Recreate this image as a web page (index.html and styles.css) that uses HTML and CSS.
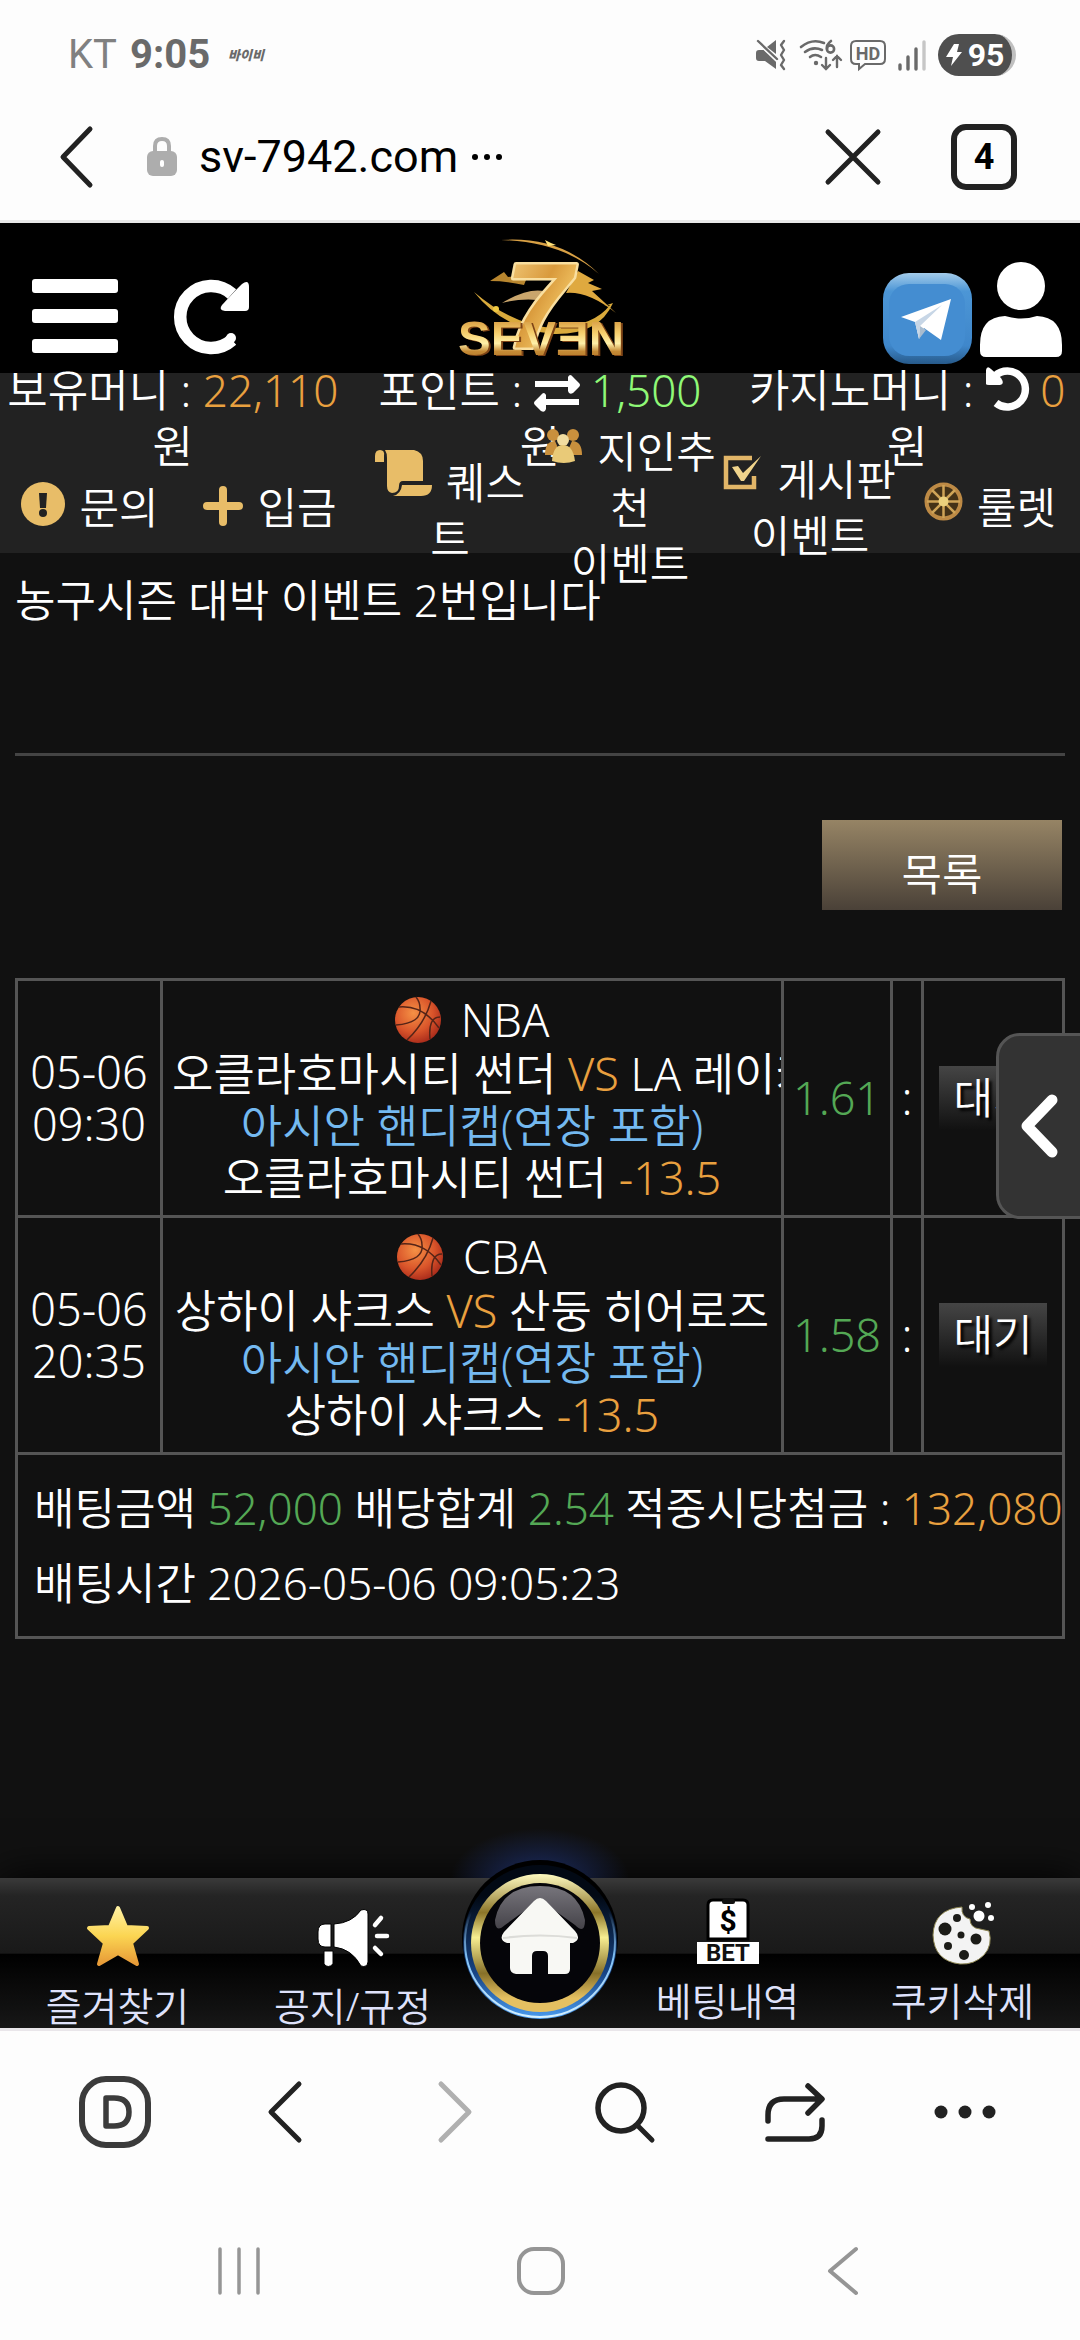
FILE: index.html
```html
<!DOCTYPE html>
<html lang="ko">
<head>
<meta charset="utf-8">
<meta name="viewport" content="width=device-width, initial-scale=1">
<title>SEVEN</title>
<link rel="stylesheet" href="styles.css">
</head>
<body>
<div class="status-bar">
  <div class="status-left">
    <span class="carrier">KT</span>
    <span class="clock">9:05</span>
    <span class="notice">바이비</span>
  </div>
  <div class="status-right">
    <svg class="s-mute" width="32" height="32" viewBox="0 0 32 32" aria-hidden="true">
      <path d="M2 11h7l12 10v9L10 22H4q-3 0-3-3v-5q0-3 3-3z" fill="#6a6a6a"/>
      <path d="M12 8l9-7v14z" fill="#6a6a6a"/>
      <path d="M3 3l20 19" stroke="#fdfdfd" stroke-width="4"/>
      <path d="M3 2l19 18" stroke="#6a6a6a" stroke-width="2.4" stroke-linecap="round"/>
      <path d="M29 2l-3 4 3 5-3 5 3 5-3 5 3 4" fill="none" stroke="#6a6a6a" stroke-width="2.4" stroke-linecap="round" stroke-linejoin="round"/>
    </svg>
    <svg class="s-wifi" width="44" height="32" viewBox="0 0 44 32" aria-hidden="true">
      <g fill="none" stroke="#6a6a6a" stroke-width="2.6" stroke-linecap="round">
        <path d="M2 8q11-9 23-4"/><path d="M6 13q8-6 17-2"/><path d="M11 18q5-4 11 0"/>
        <path d="M32 2q-5 4-4 8"/><circle cx="31.500" cy="10" r="3.600"/>
        <path d="M27 19v11M23 26l4 4 4-4M38 28V17M34 21l4-4 4 4" stroke-width="2.4"/>
      </g>
      <circle cx="17" cy="24" r="2.200" fill="#6a6a6a"/>
    </svg>
    <svg class="s-hd" width="36" height="32" viewBox="0 0 36 32" aria-hidden="true">
      <path d="M6 2h24q5 0 5 5v13q0 5-5 5H15l-6 5v-5H6q-5 0-5-5V7q0-5 5-5z" fill="none" stroke="#6a6a6a" stroke-width="2"/>
      <text x="18" y="21" text-anchor="middle" class="hd-text">HD</text>
    </svg>
    <svg class="s-signal" width="28" height="32" viewBox="0 0 28 32" aria-hidden="true">
      <path d="M2 26v4M10 18v12M18 10v20" stroke="#6a6a6a" stroke-width="3.400" stroke-linecap="round"/>
      <path d="M26 3v27" stroke="#c6c6c6" stroke-width="3.400" stroke-linecap="round"/>
    </svg>
    <span class="battery">
      <svg width="16" height="24" viewBox="0 0 16 24" aria-hidden="true"><path d="M8 1h5l-2 8h5L5 23l2-9H0z" fill="#fff"/></svg>95
    </span>
  </div>
</div>

<div class="url-bar">
  <button class="plain" type="button" aria-label="뒤로">
    <svg width="36" height="64" viewBox="0 0 36 64"><path d="M32 4L5 32l27 28" fill="none" stroke="#222" stroke-width="5" stroke-linecap="round" stroke-linejoin="round"/></svg>
  </button>
  <a class="address" href="#">
    <svg width="32" height="42" viewBox="0 0 32 42" aria-hidden="true"><path d="M9 18v-8q0-7 7-7t7 7v8" fill="none" stroke="#adadad" stroke-width="4"/><rect x="1" y="15" width="30" height="25" rx="6" fill="#adadad"/><rect x="14" y="24" width="4" height="7" rx="2" fill="#fff"/></svg>
    <span>sv-7942.com</span>
    <svg width="30" height="6" viewBox="0 0 30 6" aria-hidden="true"><circle cx="3" cy="3" r="3"/><circle cx="15" cy="3" r="3"/><circle cx="27" cy="3" r="3"/></svg>
  </a>
  <button class="plain close" type="button" aria-label="닫기">
    <svg width="56" height="56" viewBox="0 0 56 56"><path d="M3 3l50 50M53 3L3 53" stroke="#222" stroke-width="5" stroke-linecap="round"/></svg>
  </button>
  <button class="tabs" type="button" aria-label="탭 4개">4</button>
</div>

<header class="site-header">
  <div class="header-left">
    <button class="plain" type="button" aria-label="메뉴">
      <svg width="86" height="76" viewBox="0 0 86 76" fill="#fff"><rect y="1" width="86" height="14" rx="3"/><rect y="31" width="86" height="14" rx="3"/><rect y="61" width="86" height="14" rx="3"/></svg>
    </button>
    <button class="plain" type="button" aria-label="새로고침">
      <svg width="74" height="76" viewBox="0 0 74 76"><path d="M57 62A31 31 0 1 1 57 16" fill="none" stroke="#fff" stroke-width="12.500"/><path d="M60 13l7-7q7-5 7 3v20q0 4-4 4H50q-7-1-3-6z" fill="#fff"/><circle cx="56" cy="60" r="5" fill="#fff"/></svg>
    </button>
  </div>
  <a class="logo" href="#" aria-label="SEVEN">
    <svg width="168" height="124" viewBox="0 0 168 124">
      <defs>
        <linearGradient id="gold" x1="0" y1="0" x2="0" y2="1"><stop offset="0" stop-color="#c07a28"/><stop offset=".4" stop-color="#f5cd6b"/><stop offset=".6" stop-color="#fff0a8"/><stop offset=".75" stop-color="#c58a35"/><stop offset="1" stop-color="#a06a22"/></linearGradient>
        <linearGradient id="gold7" x1="0" y1="0" x2="1" y2="1"><stop offset="0" stop-color="#f8d58a"/><stop offset=".45" stop-color="#d99a3c"/><stop offset=".7" stop-color="#f3c766"/><stop offset="1" stop-color="#c88a30"/></linearGradient>
      </defs>
      <path d="M45 5q60-4 98 34q-36-32-98-34z" fill="#d9a145"/>
      <path d="M89 5l6 3 5 2-8 1z" fill="#ffe27a"/>
      <path d="M34 46l14-9 4 5 20-2-4 10q-18-4-34-4z" fill="#b8862f"/>
      <path d="M122 36l16 9-6 3 14 6-10 2 24 22q-28-22-50-20z" fill="#dfa93f"/>
      <path d="M46 68q30-18 48-10l-4 8q-22-4-44 2z" fill="#c9a56c"/>
      <path d="M18 57q40 34 80 36 40-2 56-23l-6 1 9-3q-14 32-59 31-50-4-80-42z" fill="#d9aa3c"/>
      <circle cx="40" cy="74" r="3" fill="#efc944"/>
      <text x="49" y="112" class="logo-seven" fill="url(#gold7)" stroke="#f9dfa0">7</text>
      <text x="4" y="121" class="logo-word" fill="#7e4416">SEVƎN</text>
      <text x="2" y="120" class="logo-word" fill="url(#gold)">SEVƎN</text>
    </svg>
  </a>
  <div class="header-right">
    <a href="#" aria-label="텔레그램">
      <svg width="89" height="91" viewBox="0 0 89 91">
        <defs><linearGradient id="tg" x1="0" y1="0" x2="0" y2="1"><stop offset="0" stop-color="#a3cbea"/><stop offset=".2" stop-color="#4c96d6"/><stop offset=".8" stop-color="#3f87cb"/><stop offset="1" stop-color="#275a8a"/></linearGradient></defs>
        <rect width="89" height="91" rx="26" fill="url(#tg)"/><rect x="6" y="11" width="76" height="72" rx="20" fill="#448dd1"/>
        <path d="M18 44l50-18-10 41-17-12-5 11-4-17z" fill="#fff"/><path d="M32 49l27-17-22 21-1 13z" fill="#c7d6e6"/><path d="M37 53l-1 13 7-9z" fill="#a9bccf"/>
      </svg>
    </a>
    <a href="#" aria-label="내 정보">
      <svg width="82" height="102" viewBox="0 0 82 102" fill="#fff"><circle cx="41" cy="24" r="24"/><path d="M25 54q16 5 32 0 25 1 25 29v6q0 6-6 6H6q-6 0-6-6v-6q0-28 25-29z"/></svg>
    </a>
  </div>
</header>

<section class="info-bar">
  <div class="stats">
    <p>보유머니 : <span class="orange">22,110</span><br>원</p>
    <p>포인트 : <svg class="stat-icon" width="46" height="36" viewBox="0 0 46 36" fill="#fff" aria-hidden="true"><path d="M1 6h33V2q2-4 5 0l6 6q2 2 0 4l-6 6q-4 2-5-2v-4H1zM45 24H12v-4q-2-4-5 0l-6 6q-2 2 0 4l6 6q4 2 5-2v-4h33z"/></svg> <span class="lime">1,500</span><br>원</p>
    <p>카지노머니 : <svg class="stat-icon" width="44" height="46" viewBox="0 0 44 46" aria-hidden="true"><path d="M10 11a18 18 0 1 1 1 27" fill="none" stroke="#fff" stroke-width="7.500"/><path d="M1 19V5q1-5 5-1l10 9q4 6-1 7H4q-3 0-3-1z" fill="#fff"/></svg> <span class="orange">0</span><br>원</p>
  </div>
  <nav class="quick-menu">
    <a href="#"><svg class="menu-icon low" width="44" height="44" viewBox="0 0 44 44"><circle cx="22" cy="22" r="22" fill="#e8bd68"/><path d="M18 11h8l-1 15h-6z" fill="#222"/><circle cx="22" cy="31" r="4" fill="#222"/></svg>문의</a>
    <a href="#"><svg class="menu-icon low" width="40" height="40" viewBox="0 0 40 40"><path d="M20 4v32M4 20h32" stroke="#e8bd68" stroke-width="8" stroke-linecap="round"/></svg>입금</a>
    <a href="#"><svg class="menu-icon" width="57" height="46" viewBox="0 0 57 46" fill="#e8bd68"><path d="M0 12V6q0-6 5-6t4 6v6zM10 0h29q9 2 9 11v20H28q-4 0-4 5 0 7-7 7-5-1-5-7V8q0-5-2-8zM27 35h30q0 11-11 11H18q8-2 9-11z"/></svg>퀘스<br>트</a>
    <a href="#"><svg class="menu-icon" width="39" height="39" viewBox="0 0 39 39"><g fill="#c9903d"><circle cx="9" cy="9" r="6"/><circle cx="29" cy="9" r="6"/><path d="M1 29q0-14 10-14l6 14zM38 29q0-14-10-14l-6 14z"/></g><circle cx="19" cy="14" r="6" fill="#f2dda0"/><path d="M8 35q1-16 11-16t12 16q-11 4-23 0z" fill="#e9ca78"/></svg>지인추<br>천<br>이벤트</a>
    <a href="#"><svg class="menu-icon" width="39" height="39" viewBox="0 0 39 39"><path d="M30 22v11H2V4h26" fill="none" stroke="#e2b668" stroke-width="4.500"/><path d="M8 13l6-1 5 7L37 2 20 27h-3z" fill="#f0d48c"/></svg>게시판<br>이벤트</a>
    <a href="#"><svg class="menu-icon" width="39" height="39" viewBox="0 0 39 39"><circle cx="19.500" cy="19.500" r="17" fill="#443217" stroke="#bd8a45" stroke-width="4"/><path d="M19.500 3v33M3 19.500h33M8 8l23 23M31 8L8 31" stroke="#cfa457" stroke-width="2.500"/><circle cx="19.500" cy="19.500" r="5" fill="#ecd17d"/></svg>룰렛</a>
  </nav>
</section>

<main class="content">
  <p class="article">농구시즌 대박 이벤트 2번입니다</p>
  <div class="actions"><button class="list-button" type="button">목록</button></div>

  <div class="ticket-wrap">
    <table class="ticket">
      <colgroup><col class="c-date"><col><col class="c-odds"><col class="c-score"><col class="c-state"></colgroup>
      <tbody>
        <tr>
          <td>05-06<br>09:30</td>
          <td><div class="match"><div class="league"><svg class="ball" width="46" height="46" viewBox="0 0 46 46" aria-hidden="true"><defs><radialGradient id="ball" cx=".4" cy=".35" r=".7"><stop offset="0" stop-color="#f59145"/><stop offset=".6" stop-color="#d9542a"/><stop offset="1" stop-color="#a5281a"/></radialGradient></defs><circle cx="23" cy="23" r="23" fill="url(#ball)"/><path d="M4 10q24-2 40 21M1 28q26-2 24-17 0-6-4-11M12 43Q30 26 36 4M35 42q-2-22 10-22" fill="none" stroke="#552417" stroke-width="1.500"/></svg>NBA</div>
            <div>오클라호마시티 썬더 <span class="orange">VS</span> LA 레이커스</div>
            <div class="blue">아시안 핸디캡(연장 포함)</div>
            <div>오클라호마시티 썬더 <span class="orange">-13.5</span></div></div></td>
          <td class="green">1.61</td>
          <td>:</td>
          <td><span class="badge">대기</span></td>
        </tr>
        <tr>
          <td>05-06<br>20:35</td>
          <td><div class="match"><div class="league"><svg class="ball" width="46" height="46" viewBox="0 0 46 46" aria-hidden="true"><circle cx="23" cy="23" r="23" fill="url(#ball)"/><path d="M4 10q24-2 40 21M1 28q26-2 24-17 0-6-4-11M12 43Q30 26 36 4M35 42q-2-22 10-22" fill="none" stroke="#552417" stroke-width="1.500"/></svg>CBA</div>
            <div>상하이 샤크스 <span class="orange">VS</span> 산둥 히어로즈</div>
            <div class="blue">아시안 핸디캡(연장 포함)</div>
            <div>상하이 샤크스 <span class="orange">-13.5</span></div></div></td>
          <td class="green">1.58</td>
          <td>:</td>
          <td><span class="badge">대기</span></td>
        </tr>
        <tr>
          <td colspan="5"><div class="summary">배팅금액 <span class="green">52,000</span> 배당합계 <span class="green">2.54</span> 적중시당첨금 : <span class="orange">132,080</span><br>배팅시간 2026-05-06 09:05:23</div></td>
        </tr>
      </tbody>
    </table>
    <button class="drawer" type="button" aria-label="열기">
      <svg width="40" height="66" viewBox="0 0 40 66"><path d="M33 7L8 33l25 26" fill="none" stroke="#fff" stroke-width="11" stroke-linecap="round" stroke-linejoin="round"/></svg>
    </button>
  </div>
</main>

<nav class="bottom-nav">
  <a href="#"><svg width="64" height="70" viewBox="0 0 64 70"><defs><linearGradient id="star" x1="0" y1="0" x2="0" y2="1"><stop offset="0" stop-color="#fff0a0"/><stop offset=".5" stop-color="#fbd552"/><stop offset="1" stop-color="#e79a37"/></linearGradient></defs><path d="M32 9l8 19 21 1-16 15 6 21-19-11-19 11 6-21L3 29l21-1z" fill="url(#star)" stroke="url(#star)" stroke-width="4" stroke-linejoin="round"/></svg>즐겨찾기</a>
  <a href="#"><svg width="72" height="70" viewBox="0 0 72 70"><path d="M8 25h6v23H8q-7 0-7-8v-7q0-8 7-8zM17 25q18-1 27-14 7-2 7 4v48q-1 6-7 4-9-17-27-19zM7 52h9v13q-5 5-9 0z" fill="#fff" stroke="#000" stroke-width="1"/><path d="M58 26l6-7M60 37h10M58 49l6 6" stroke="#fff" stroke-width="4.500" stroke-linecap="round"/></svg>공지/규정</a>
  <a class="home" href="#" aria-label="홈">
    <svg width="160" height="164" viewBox="0 0 160 164">
      <defs>
        <linearGradient id="ring" x1="0" y1="0" x2="0" y2="1"><stop offset="0" stop-color="#fffbc0"/><stop offset=".28" stop-color="#8c7529"/><stop offset=".46" stop-color="#f7ee91"/><stop offset=".72" stop-color="#877029"/><stop offset=".9" stop-color="#e5c061"/></linearGradient>
        <linearGradient id="rim" x1="0" y1="0" x2="0" y2="1"><stop offset=".2" stop-color="#020914"/><stop offset=".7" stop-color="#164384"/><stop offset="1" stop-color="#4b9cf0"/></linearGradient>
        <linearGradient id="edge" x1="0" y1="0" x2="0" y2="1"><stop offset=".3" stop-color="#9fd4ff" stop-opacity="0"/><stop offset=".6" stop-color="#7fc0f5"/><stop offset="1" stop-color="#d4f0ff"/></linearGradient>
        <linearGradient id="gloss" x1="0" y1="0" x2="0" y2="1"><stop offset="0" stop-color="#77757c"/><stop offset="1" stop-color="#454349"/></linearGradient>
      </defs>
      <circle cx="80" cy="80" r="78"/>
      <circle cx="80" cy="84" r="77" fill="url(#rim)"/>
      <circle cx="80" cy="84" r="75" fill="none" stroke="url(#edge)" stroke-width="2"/>
      <circle cx="80" cy="85" r="69" fill="url(#ring)"/>
      <circle cx="80" cy="85" r="60" fill="#050509"/>
      <path d="M35 62Q42 28 80 28t45 34q0 15-10 5L80 42 45 67Q35 76 35 62z" fill="url(#gloss)"/>
      <path d="M74 43q6-6 12 0l29 30q7 8-2 12h-3v26q0 5-5 5H88V98q0-5-5-5h-6q-5 0-5 5v18H56q-6-1-6-6V85h-3q-9-3-3-11z" fill="#f8f8f4"/>
      <path d="M43 80q37-5 74 0" fill="none" stroke="#dcdcd8" stroke-width="2"/>
    </svg>
  </a>
  <a href="#"><svg width="64" height="65" viewBox="0 0 64 65"><path d="M17 1h30q5 0 5 5v34H12V6q0-5 5-5z" fill="#fff" stroke="#000" stroke-width="3"/><rect x="26" width="13" height="5" rx="2" fill="#111"/><rect x="1" y="43" width="62" height="22" fill="#fff"/><text x="32" y="32" text-anchor="middle" class="bet-dollar">$</text><text x="32" y="62" text-anchor="middle" class="bet-word">BET</text></svg>베팅내역</a>
  <a href="#"><svg width="64" height="65" viewBox="0 0 64 65"><path d="M31 8q-1 10 8 12 0 9 10 10l9 2q4 14-5 24-10 10-24 9Q3 62 2 36 3 10 31 8z" fill="#f3f3f3" stroke="#8c8552"/><g fill="#1c1c18"><circle cx="14" cy="30" r="6.500"/><circle cx="26" cy="19" r="4"/><circle cx="30" cy="36" r="3.500"/><circle cx="45" cy="40" r="5.500"/><circle cx="17" cy="47" r="4"/><circle cx="33" cy="56" r="5"/></g><g fill="#fff"><circle cx="48" cy="17" r="5.500"/><circle cx="41" cy="8" r="3"/><circle cx="57" cy="6" r="3"/><circle cx="60" cy="19" r="3"/></g></svg>쿠키삭제</a>
</nav>

<div class="browser-bar">
  <button class="plain" type="button" aria-label="D"><svg width="72" height="72" viewBox="0 0 72 72"><rect x="3" y="3" width="66" height="66" rx="24" fill="none" stroke="#3b3b3b" stroke-width="6"/><path d="M27 22h8q15 0 15 14T35 50h-8z" fill="none" stroke="#3b3b3b" stroke-width="5.500" stroke-linejoin="round"/></svg></button>
  <button class="plain" type="button" aria-label="이전"><svg width="36" height="64" viewBox="0 0 36 64"><path d="M32 4L4 32l28 28" fill="none" stroke="#222" stroke-width="5" stroke-linecap="round" stroke-linejoin="round"/></svg></button>
  <button class="plain" type="button" aria-label="다음"><svg width="36" height="64" viewBox="0 0 36 64"><path d="M4 4l28 28L4 60" fill="none" stroke="#b0b0b0" stroke-width="5" stroke-linecap="round" stroke-linejoin="round"/></svg></button>
  <button class="plain" type="button" aria-label="검색"><svg width="62" height="62" viewBox="0 0 62 62"><circle cx="27" cy="27" r="23" fill="none" stroke="#222" stroke-width="5.500"/><path d="M43 44l15 15" stroke="#222" stroke-width="5" stroke-linecap="round"/></svg></button>
  <button class="plain" type="button" aria-label="공유"><svg width="62" height="62" viewBox="0 0 62 62"><path d="M4 40v-6q0-16 16-16h37M44 5l14 13-14 14M58 39v6q0 13-13 13H4" fill="none" stroke="#222" stroke-width="5.500" stroke-linecap="round" stroke-linejoin="round"/></svg></button>
  <button class="plain" type="button" aria-label="더보기"><svg width="62" height="14" viewBox="0 0 62 14" fill="#222"><circle cx="7" cy="7" r="6.500"/><circle cx="31" cy="7" r="6.500"/><circle cx="55" cy="7" r="6.500"/></svg></button>
</div>

<div class="system-bar">
  <button class="plain" type="button" aria-label="최근 앱"><svg width="44" height="48" viewBox="0 0 44 48"><path d="M3 2v44M22 2v44M41 2v44" stroke="#959595" stroke-width="3.500" stroke-linecap="round"/></svg></button>
  <button class="plain" type="button" aria-label="홈 화면"><svg width="48" height="48" viewBox="0 0 48 48"><rect x="2" y="2" width="44" height="44" rx="15" fill="none" stroke="#959595" stroke-width="4"/></svg></button>
  <button class="plain" type="button" aria-label="뒤로 가기"><svg width="32" height="48" viewBox="0 0 32 48"><path d="M29 2L3 24l26 22" fill="none" stroke="#959595" stroke-width="4" stroke-linecap="round" stroke-linejoin="round"/></svg></button>
</div>
</body>
</html>
```

FILE: styles.css
```css
* { box-sizing: border-box; }

body {
  margin: 0;
  min-height: 100vh;
  display: flex;
  flex-direction: column;
  overflow-x: hidden;
  background: #111;
  color: #fff;
  font-family: "Noto Sans", "Noto Sans CJK KR", sans-serif;
  font-weight: 350;
  font-size: 44px;
  line-height: 56px;
}

p { margin: 0; }
a { color: inherit; text-decoration: none; }
svg { display: block; overflow: visible; }
button { font: inherit; cursor: pointer; }

.plain { padding: 0; border: 0; background: none; }

.orange { color: #e9a03f; }
.green { color: #54a855; }
.lime { color: #8ff977; }
.blue { color: #74b9f0; }

/* Phone status bar */
.status-bar {
  display: flex;
  justify-content: space-between;
  align-items: center;
  height: 110px;
  padding: 0 64px 0 68px;
  background: #fdfdfd;
  color: #6a6a6a;
  font-family: Roboto, sans-serif;
  font-size: 40px;
}
.status-left, .status-right { display: flex; align-items: center; }
.carrier { font-weight: 400; color: #808080; }
.clock { margin-left: 13px; font-weight: 700; }
.notice {
  margin-left: 18px;
  font-family: "Noto Sans CJK KR", sans-serif;
  font-size: 13px;
  font-weight: 900;
  font-style: italic;
}
.s-wifi { margin-left: 12px; }
.s-hd { margin-left: 7px; }
.s-signal { margin-left: 12px; }
.hd-text { font: 700 18px Roboto, sans-serif; fill: #6a6a6a; }
.battery {
  display: flex;
  align-items: center;
  justify-content: center;
  gap: 6px;
  width: 78px;
  height: 42px;
  margin-left: 12px;
  border-right: 4px solid #c0c0c0;
  border-radius: 21px;
  background: #4f4f4f;
  color: #fff;
  font-size: 32px;
  font-weight: 700;
}

/* Address bar */
.url-bar {
  display: flex;
  align-items: center;
  height: 113px;
  padding: 0 63px 16px 58px;
  border-bottom: 3px solid #e8e8e8;
  background: #fdfdfd;
  color: #000;
  font-family: Roboto, sans-serif;
  font-weight: 400;
  font-size: 45px;
}
.address { display: flex; align-items: center; flex: 1; margin-left: 52px; }
.address span { margin: 0 14px 0 21px; }
.tabs {
  width: 66px;
  height: 66px;
  margin-left: 70px;
  padding: 0;
  border: 6px solid #222;
  border-radius: 15px;
  background: none;
  font-size: 36px;
  font-weight: 700;
  line-height: 54px;
  color: #000;
}

/* Site header */
.site-header {
  display: grid;
  grid-template-columns: 1fr auto 1fr;
  align-items: end;
  height: 150px;
  background: #000;
}
.header-left { display: flex; gap: 57px; padding: 0 0 19px 32px; }
.logo { padding-bottom: 14px; }
.header-right {
  display: flex;
  justify-content: flex-end;
  align-items: flex-end;
  gap: 8px;
  padding: 0 18px 9px 0;
}
.logo-seven {
  font: italic 700 120px "Liberation Sans", sans-serif;
  stroke-width: 5px;
  stroke-linejoin: round;
  paint-order: stroke;
}
.logo-word { font: 700 49px "Liberation Sans", sans-serif; }

/* Balance and quick menu; long entries spill over the fixed rows */
.info-bar {
  position: relative;
  z-index: 1;
  display: grid;
  grid-template-rows: 90px 90px;
  background: #222;
  text-align: center;
  white-space: nowrap;
}
.stats, .quick-menu {
  display: grid;
  align-items: center;
  align-content: center;
}
.stats {
  grid-template-columns: repeat(3, 34%);
  justify-content: center;
}
.quick-menu {
  grid-template-columns: repeat(6, 1fr);
  font-size: 43px;
}
.stat-icon { display: inline-block; vertical-align: -4px; }
.menu-icon { display: inline-block; margin-right: 14px; vertical-align: 3px; }
.menu-icon.low { vertical-align: -2px; }

/* Post */
.content { flex: 1; padding: 19px 15px 0; }
.article { height: 184px; border-bottom: 3px solid #444; }
.actions { display: flex; justify-content: flex-end; padding: 64px 3px 68px 0; }
.list-button {
  width: 240px;
  height: 90px;
  padding: 18px 0 0;
  border: 0;
  background: linear-gradient(#968465, #4a4138);
  color: #fff;
}

/* Betting slip */
.ticket-wrap { position: relative; }
.ticket {
  width: 100%;
  table-layout: fixed;
  border-collapse: collapse;
  text-align: center;
  font-size: 45px;
  line-height: 52px;
}
.ticket td {
  height: 237px;
  padding: 0;
  border: 3px solid #555;
  vertical-align: middle;
}
.ticket tr:last-child td { height: 184px; }
.c-date { width: 145px; }
.c-odds { width: 109px; }
.c-score { width: 31px; }
.c-state { width: 141px; }
.match { padding: 0 9px; overflow: hidden; white-space: nowrap; }
.league {
  display: flex;
  justify-content: center;
  align-items: center;
  gap: 20px;
  height: 56px;
}
.badge {
  display: inline-block;
  width: 108px;
  line-height: 64px;
  background: linear-gradient(#454545, #111);
  text-shadow: 3px 3px 3px #000;
  font-size: 43px;
}
.summary {
  padding: 0 0 0 16px;
  overflow: hidden;
  font-size: 44px;
  line-height: 75px;
  text-align: left;
  white-space: nowrap;
}
.drawer {
  position: absolute;
  top: 55px;
  right: -18px;
  display: flex;
  align-items: center;
  width: 87px;
  height: 186px;
  padding: 0 0 0 20px;
  border: 3px solid #555;
  border-radius: 24px 0 0 24px;
  background: #333;
}

/* Bottom navigation */
.bottom-nav {
  display: grid;
  grid-template: 100% / 1fr 1fr 140px 1fr 1fr;
  height: 150px;
  background: linear-gradient(#3a3a3a, #242424 12%, #191919 50%, #000 51%, #171717);
  box-shadow: 0 0 40px #000;
  color: #dfe2fb;
  font-size: 39px;
  line-height: 44px;
}
.bottom-nav > a {
  display: flex;
  flex-direction: column;
  align-items: center;
  gap: 15px;
  padding-top: 21px;
}
.bottom-nav > .home {
  position: relative;
  justify-content: flex-end;
  padding: 0 0 6px;
}
.home::before {
  content: "";
  position: absolute;
  bottom: 100%;
  left: -20px;
  right: -20px;
  height: 50px;
  background: radial-gradient(ellipse at 50% 100%, #17234a 20%, transparent 70%);
}
.home svg { position: relative; flex: none; }
.bet-dollar { font: 700 30px Roboto, sans-serif; fill: #000; }
.bet-word { font: 700 24px Roboto, sans-serif; fill: #111; }

/* Browser toolbar and system keys */
.browser-bar, .system-bar {
  display: grid;
  align-items: center;
  justify-items: center;
  background: #fdfdfd;
}
.browser-bar {
  grid-template-columns: repeat(6, 1fr);
  height: 165px;
  padding: 0 30px;
  border-top: 3px solid #e9e6ea;
}
.system-bar {
  grid-template-columns: repeat(3, 1fr);
  height: 147px;
  padding: 8px 86px 0 88px;
}
```
